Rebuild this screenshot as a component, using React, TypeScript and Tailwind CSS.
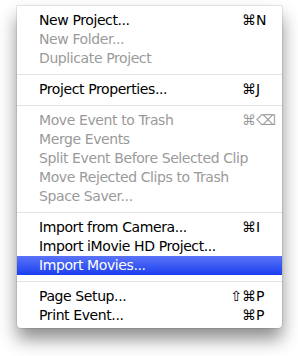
type Item = {
  label: string
  disabled?: boolean
  active?: boolean
  mod?: string
  keyName?: string
}

type Entry = Item | 'sep'

const entries: Entry[] = [
  { label: 'New Project...', mod: '⌘', keyName: 'N' },
  { label: 'New Folder...', disabled: true },
  { label: 'Duplicate Project', disabled: true },
  'sep',
  { label: 'Project Properties...', mod: '⌘', keyName: 'J' },
  'sep',
  { label: 'Move Event to Trash', disabled: true, mod: '⌘', keyName: '⌫' },
  { label: 'Merge Events', disabled: true },
  { label: 'Split Event Before Selected Clip', disabled: true },
  { label: 'Move Rejected Clips to Trash', disabled: true },
  { label: 'Space Saver...', disabled: true },
  'sep',
  { label: 'Import from Camera...', mod: '⌘', keyName: 'I' },
  { label: 'Import iMovie HD Project...' },
  { label: 'Import Movies...', active: true },
  'sep',
  { label: 'Page Setup...', mod: '⇧⌘', keyName: 'P' },
  { label: 'Print Event...', mod: '⌘', keyName: 'P' },
]

function MenuRow({ item }: { item: Item }) {
  const color = item.active
    ? 'text-white bg-gradient-to-b from-[#5a72f7] to-[#1c3cf0]'
    : item.disabled
      ? 'text-[#9a9a9a]'
      : 'text-black'

  return (
    <div className={`flex h-[19px] items-center pl-[22px] pr-[10px] ${color}`}>
      <span className="flex-1 whitespace-nowrap tracking-[-0.4px]">{item.label}</span>
      {item.mod && (
        <span className="flex items-center">
          <span className="w-[30px] text-right">{item.mod}</span>
          <span className="w-[16px]">{item.keyName}</span>
        </span>
      )}
    </div>
  )
}

export default function App() {
  return (
    <div className="h-[356px] w-[298px] bg-white pl-[17px] pt-[6px]">
      <div
        className="w-[265px] rounded-b-[4px] bg-white pt-[5px] pb-[3px] text-[14px] leading-[19px] shadow-[0_0_0_1px_rgba(0,0,0,0.08),0_11px_18px_rgba(0,0,0,0.45)]"
        style={{ fontFamily: '"DejaVu Sans", "Lucida Grande", sans-serif' }}
      >
        {entries.map((entry, i) =>
          entry === 'sep' ? (
            <div key={i} className="flex h-[12px] items-center">
              <div className="h-px w-full bg-[#e2e2e2]" />
            </div>
          ) : (
            <MenuRow key={i} item={entry} />
          )
        )}
      </div>
    </div>
  )
}
